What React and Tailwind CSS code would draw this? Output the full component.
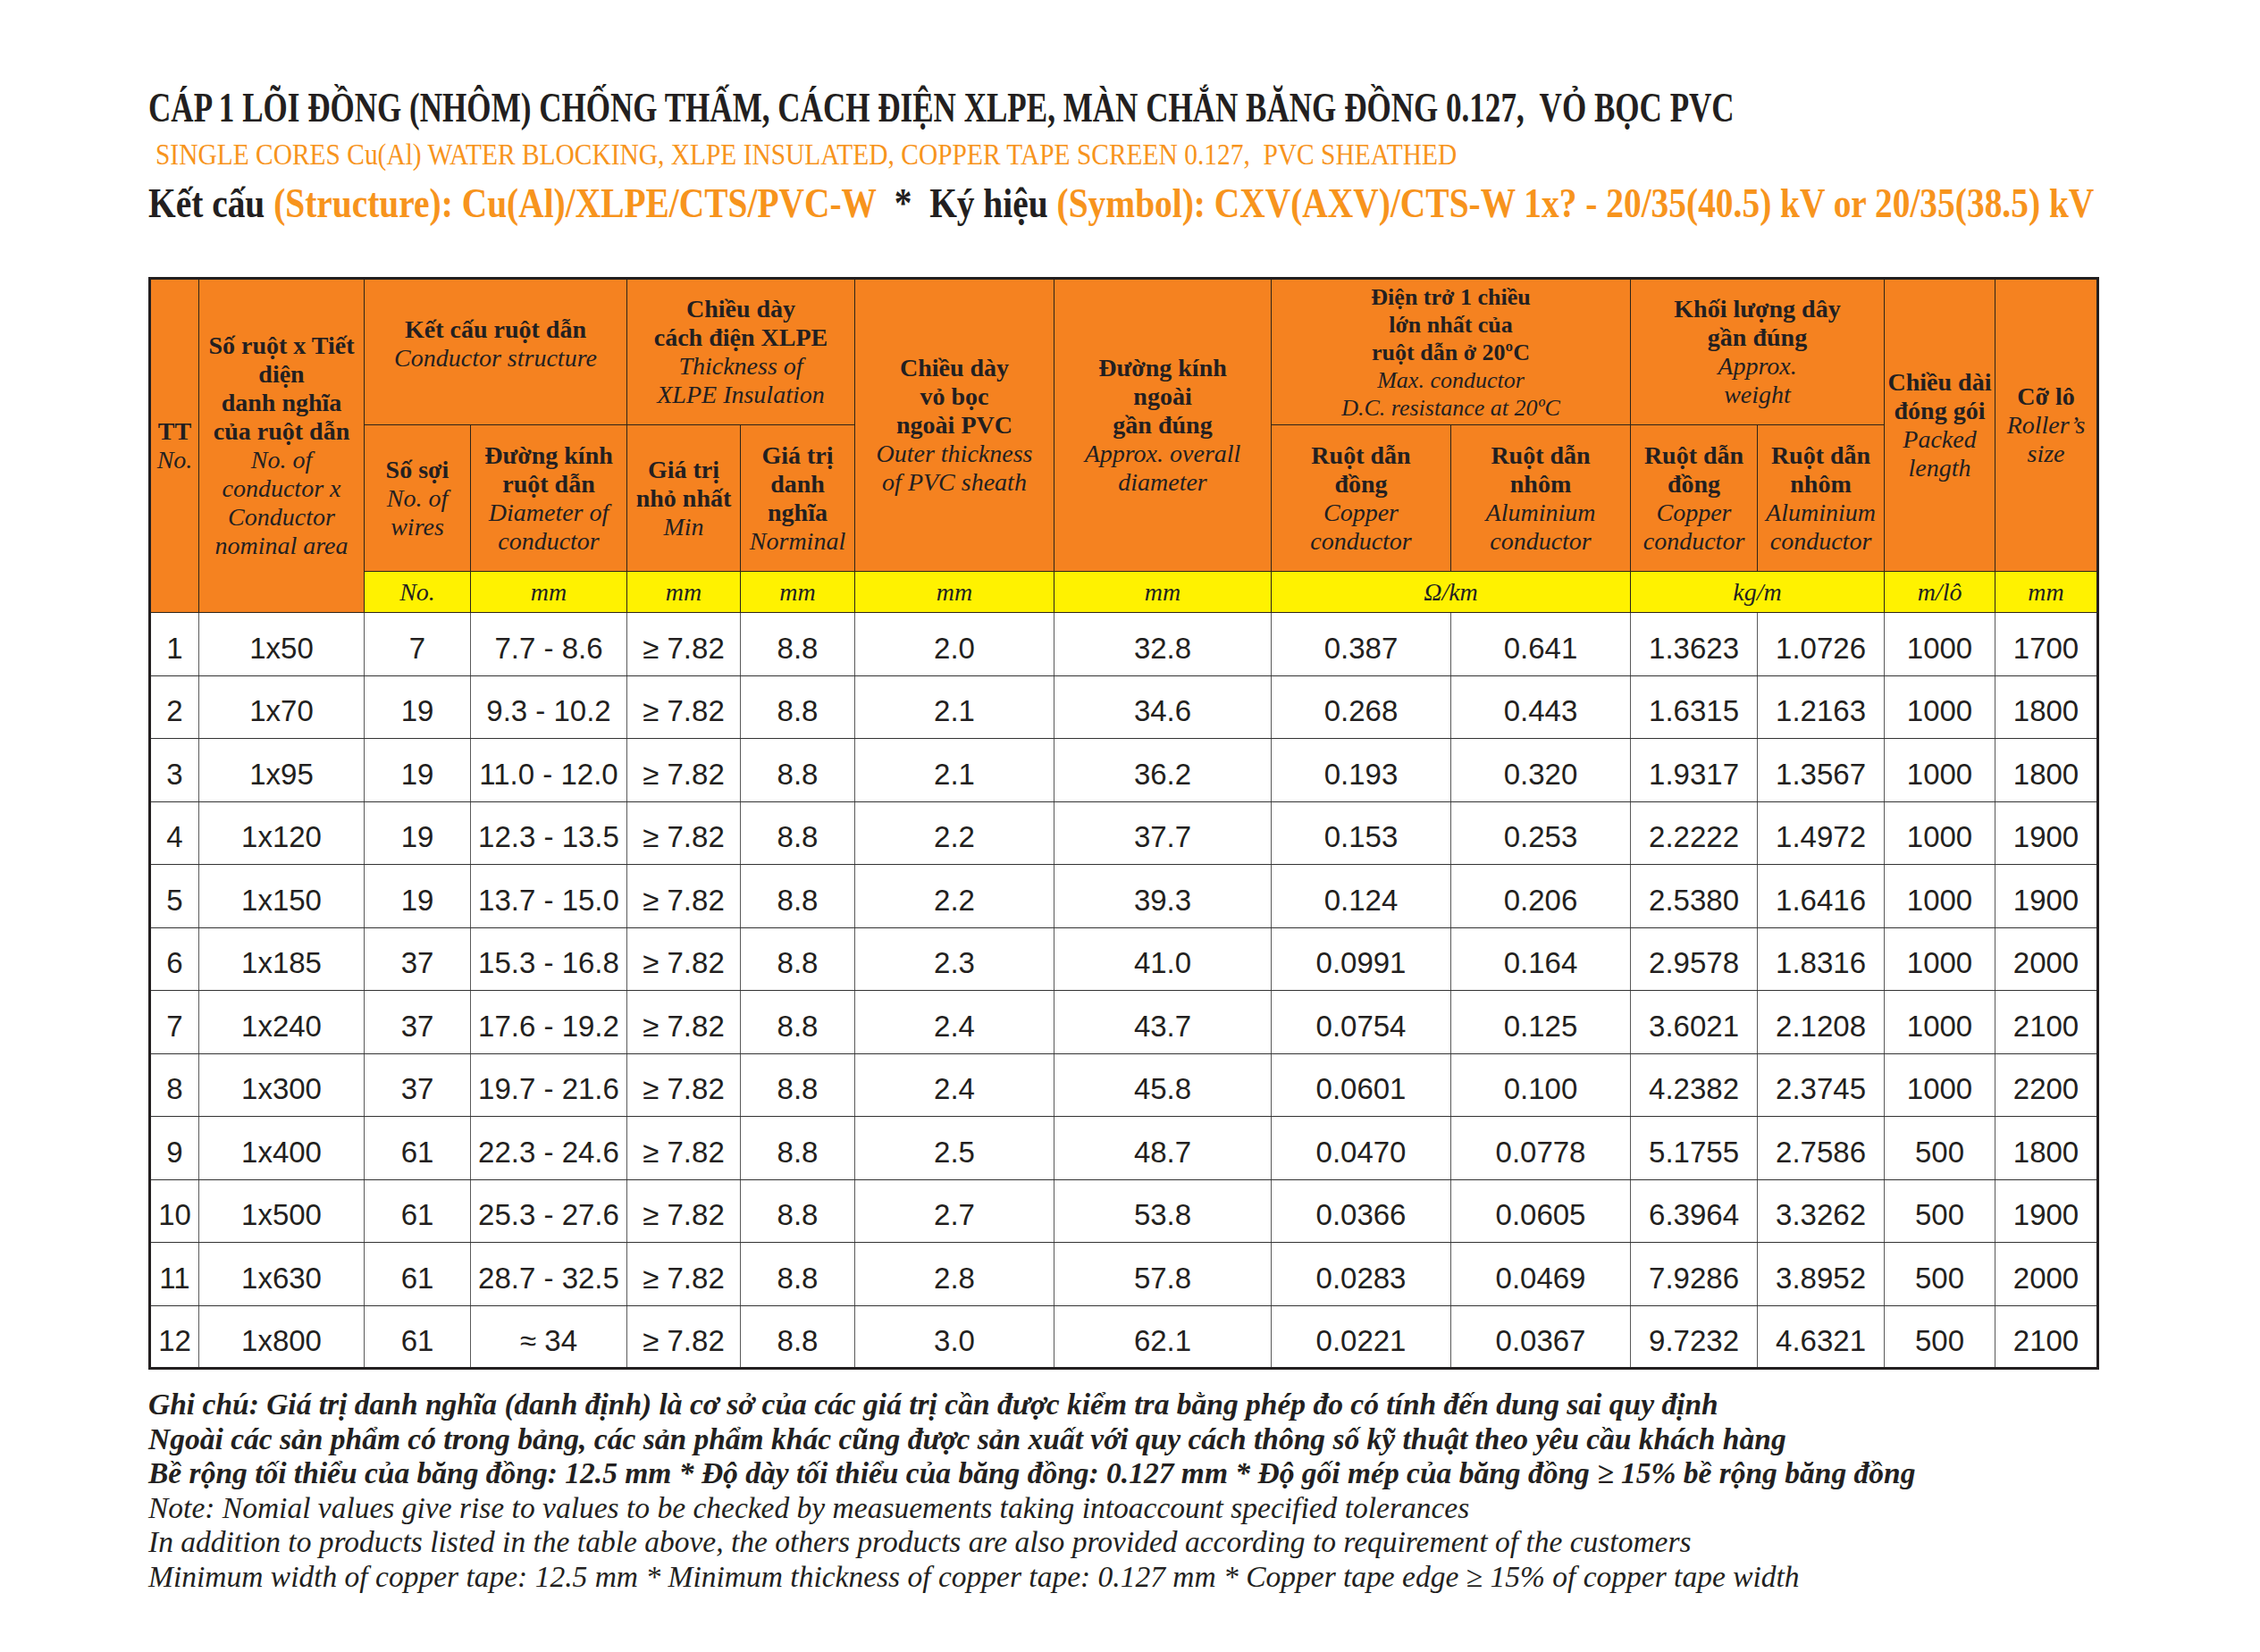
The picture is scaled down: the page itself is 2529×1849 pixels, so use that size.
const ROWS = [
  ['1', '1x50', '7', '7.7 - 8.6', '2.0', '32.8', '0.387', '0.641', '1.3623', '1.0726', '1000', '1700'],
  ['2', '1x70', '19', '9.3 - 10.2', '2.1', '34.6', '0.268', '0.443', '1.6315', '1.2163', '1000', '1800'],
  ['3', '1x95', '19', '11.0 - 12.0', '2.1', '36.2', '0.193', '0.320', '1.9317', '1.3567', '1000', '1800'],
  ['4', '1x120', '19', '12.3 - 13.5', '2.2', '37.7', '0.153', '0.253', '2.2222', '1.4972', '1000', '1900'],
  ['5', '1x150', '19', '13.7 - 15.0', '2.2', '39.3', '0.124', '0.206', '2.5380', '1.6416', '1000', '1900'],
  ['6', '1x185', '37', '15.3 - 16.8', '2.3', '41.0', '0.0991', '0.164', '2.9578', '1.8316', '1000', '2000'],
  ['7', '1x240', '37', '17.6 - 19.2', '2.4', '43.7', '0.0754', '0.125', '3.6021', '2.1208', '1000', '2100'],
  ['8', '1x300', '37', '19.7 - 21.6', '2.4', '45.8', '0.0601', '0.100', '4.2382', '2.3745', '1000', '2200'],
  ['9', '1x400', '61', '22.3 - 24.6', '2.5', '48.7', '0.0470', '0.0778', '5.1755', '2.7586', '500', '1800'],
  ['10', '1x500', '61', '25.3 - 27.6', '2.7', '53.8', '0.0366', '0.0605', '6.3964', '3.3262', '500', '1900'],
  ['11', '1x630', '61', '28.7 - 32.5', '2.8', '57.8', '0.0283', '0.0469', '7.9286', '3.8952', '500', '2000'],
  ['12', '1x800', '61', '≈ 34', '3.0', '62.1', '0.0221', '0.0367', '9.7232', '4.6321', '500', '2100'],
]

// header cell text: bold vietnamese lines, then italic english lines
function Hd({ vn, en }) {
  return (
    <>
      {vn.map((l) => <div key={l} className="font-bold whitespace-nowrap">{l}</div>)}
      {en.map((l) => <div key={l} className="italic whitespace-nowrap">{l}</div>)}
    </>
  )
}

const th = 'border border-[#2e2418] bg-[#f58220] px-0 py-0 align-middle text-center font-normal'
const unit = 'border border-[#2e2418] bg-[#fff200] px-0 py-0 text-center font-normal italic'
const td = 'border-x border-x-[#5a5a5a] border-y border-y-[#333] px-0 pt-[9px] pb-0 text-center'

export default function App() {
  return (
    <div className="min-h-screen bg-white pl-[166px] pt-[95px] text-[#231f20]">
      {/* ── Titles ── */}
      <div className="font-['Liberation_Serif',serif]">
        <div className="origin-left scale-x-[0.762] whitespace-nowrap text-[46px] font-bold leading-[52px]">
          CÁP 1 LÕI ĐỒNG (NHÔM) CHỐNG THẤM, CÁCH ĐIỆN XLPE, MÀN CHẮN BĂNG ĐỒNG 0.127,&nbsp; VỎ BỌC PVC
        </div>
        <div className="mt-[6px] origin-left translate-x-[8px] scale-x-[0.892] whitespace-nowrap text-[33px] leading-[40px] text-[#f7941d]">
          SINGLE CORES Cu(Al) WATER BLOCKING, XLPE INSULATED, COPPER TAPE SCREEN 0.127,&nbsp; PVC SHEATHED
        </div>
        <div className="mt-[9px] origin-left scale-x-[0.857] whitespace-nowrap text-[46px] font-bold leading-[52px]">
          Kết cấu <span className="text-[#f7941d]">(Structure): Cu(Al)/XLPE/CTS/PVC-W</span>&nbsp; *&nbsp; Ký hiệu{' '}
          <span className="text-[#f7941d]">(Symbol): CXV(AXV)/CTS-W 1x? - 20/35(40.5) kV or 20/35(38.5) kV</span>
        </div>
      </div>

      {/* ── Table ── */}
      <table className="mt-[56px] w-[2180px] table-fixed border-collapse border-[3px] border-[#231f20] font-['Liberation_Serif',serif] text-[28px] leading-[32px]">
        <colgroup>
          <col className="w-[55px]" />
          <col className="w-[185px]" />
          <col className="w-[119px]" />
          <col className="w-[175px]" />
          <col className="w-[127px]" />
          <col className="w-[128px]" />
          <col className="w-[223px]" />
          <col className="w-[243px]" />
          <col className="w-[201px]" />
          <col className="w-[201px]" />
          <col className="w-[142px]" />
          <col className="w-[142px]" />
          <col className="w-[124px]" />
          <col className="w-[115px]" />
        </colgroup>
        <thead>
          <tr className="h-[164px]">
            <th rowSpan={3} className={th}><Hd vn={['TT']} en={['No.']} /></th>
            <th rowSpan={3} className={th}>
              <Hd vn={['Số ruột x Tiết', 'diện', 'danh nghĩa', 'của ruột dẫn']} en={['No. of', 'conductor x', 'Conductor', 'nominal area']} />
            </th>
            <th colSpan={2} className={`${th} pb-[18px]`}><Hd vn={['Kết cấu ruột dẫn']} en={['Conductor structure']} /></th>
            <th colSpan={2} className={th}><Hd vn={['Chiều dày', 'cách điện XLPE']} en={['Thickness of', 'XLPE Insulation']} /></th>
            <th rowSpan={2} className={th}><Hd vn={['Chiều dày', 'vỏ bọc', 'ngoài PVC']} en={['Outer thickness', 'of PVC sheath']} /></th>
            <th rowSpan={2} className={th}><Hd vn={['Đường kính', 'ngoài', 'gần đúng']} en={['Approx. overall', 'diameter']} /></th>
            <th colSpan={2} className={`${th} text-[26px] leading-[31px]`}>
              <Hd vn={['Điện trở 1 chiều', 'lớn nhất của', 'ruột dẫn ở 20ºC']} en={['Max. conductor', 'D.C. resistance at 20ºC']} />
            </th>
            <th colSpan={2} className={th}><Hd vn={['Khối lượng dây', 'gần đúng']} en={['Approx.', 'weight']} /></th>
            <th rowSpan={2} className={th}><Hd vn={['Chiều dài', 'đóng gói']} en={['Packed', 'length']} /></th>
            <th rowSpan={2} className={th}><Hd vn={['Cỡ lô']} en={['Roller’s', 'size']} /></th>
          </tr>
          <tr className="h-[164px]">
            <th className={th}><Hd vn={['Số sợi']} en={['No. of', 'wires']} /></th>
            <th className={th}><Hd vn={['Đường kính', 'ruột dẫn']} en={['Diameter of', 'conductor']} /></th>
            <th className={th}><Hd vn={['Giá trị', 'nhỏ nhất']} en={['Min']} /></th>
            <th className={th}><Hd vn={['Giá trị', 'danh', 'nghĩa']} en={['Norminal']} /></th>
            <th className={th}><Hd vn={['Ruột dẫn', 'đồng']} en={['Copper', 'conductor']} /></th>
            <th className={th}><Hd vn={['Ruột dẫn', 'nhôm']} en={['Aluminium', 'conductor']} /></th>
            <th className={th}><Hd vn={['Ruột dẫn', 'đồng']} en={['Copper', 'conductor']} /></th>
            <th className={th}><Hd vn={['Ruột dẫn', 'nhôm']} en={['Aluminium', 'conductor']} /></th>
          </tr>
          <tr className="h-[46px]">
            <th className={unit}>No.</th>
            <th className={unit}>mm</th>
            <th className={unit}>mm</th>
            <th className={unit}>mm</th>
            <th className={unit}>mm</th>
            <th className={unit}>mm</th>
            <th colSpan={2} className={unit}>Ω/km</th>
            <th colSpan={2} className={unit}>kg/m</th>
            <th className={unit}>m/lô</th>
            <th className={unit}>mm</th>
          </tr>
        </thead>
        <tbody className="font-['Liberation_Sans',sans-serif] text-[33px] leading-none">
          {ROWS.map((r) => (
            <tr key={r[0]} className="h-[70.5px]">
              <td className={td}>{r[0]}</td>
              <td className={td}>{r[1]}</td>
              <td className={td}>{r[2]}</td>
              <td className={`${td} whitespace-nowrap`}>{r[3]}</td>
              <td className={`${td} whitespace-nowrap`}>≥ 7.82</td>
              <td className={td}>8.8</td>
              <td className={td}>{r[4]}</td>
              <td className={td}>{r[5]}</td>
              <td className={td}>{r[6]}</td>
              <td className={td}>{r[7]}</td>
              <td className={td}>{r[8]}</td>
              <td className={td}>{r[9]}</td>
              <td className={td}>{r[10]}</td>
              <td className={td}>{r[11]}</td>
            </tr>
          ))}
        </tbody>
      </table>

      {/* ── Notes ── */}
      <div className="mt-[20px] font-['Liberation_Serif',serif] text-[33.5px] italic leading-[38.5px]">
        <div className="whitespace-nowrap font-bold">
          Ghi chú: Giá trị danh nghĩa (danh định) là cơ sở của các giá trị cần được kiểm tra bằng phép đo có tính đến dung sai quy định
        </div>
        <div className="whitespace-nowrap font-bold">
          Ngoài các sản phẩm có trong bảng, các sản phẩm khác cũng được sản xuất với quy cách thông số kỹ thuật theo yêu cầu khách hàng
        </div>
        <div className="whitespace-nowrap font-bold">
          Bề rộng tối thiểu của băng đồng: 12.5 mm * Độ dày tối thiểu của băng đồng: 0.127 mm * Độ gối mép của băng đồng ≥ 15% bề rộng băng đồng
        </div>
        <div className="whitespace-nowrap">
          Note: Nomial values give rise to values to be checked by measuements taking intoaccount specified tolerances
        </div>
        <div className="whitespace-nowrap">
          In addition to products listed in the table above, the others products are also provided according to requirement of the customers
        </div>
        <div className="whitespace-nowrap">
          Minimum width of copper tape: 12.5 mm * Minimum thickness of copper tape: 0.127 mm * Copper tape edge ≥ 15% of copper tape width
        </div>
      </div>
    </div>
  )
}
